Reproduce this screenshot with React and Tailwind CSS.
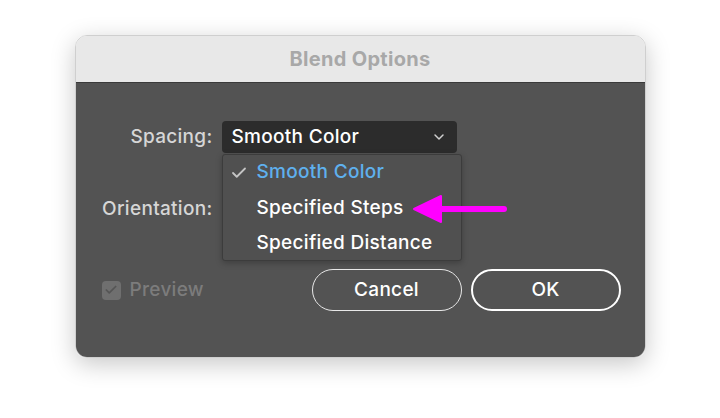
import { Check, ChevronDown } from 'lucide-react';

const font = { fontFamily: 'Inter, "Open Sans", "Liberation Sans", sans-serif' };

export default function App() {
  return (
    <div className="w-[720px] h-[418px] bg-white pt-[35px]" style={font}>
      <div className="relative mx-auto w-[571px] h-[323px] rounded-[12px] overflow-hidden border border-[#cfcfcf] shadow-[0_6px_24px_rgba(0,0,0,0.22)] flex flex-col">
        {/* Title bar */}
        <div className="h-[47px] bg-[#e8e8e8] border-b border-[#3a3a3a] flex items-center justify-center">
          <span className="text-[20px] font-bold text-[#a8a8a8] tracking-[0.3px]">Blend Options</span>
        </div>

        {/* Body */}
        <div className="flex-1 bg-[#535353] pt-[38px] text-[19px] font-medium tracking-[0.3px]">
          <div className="flex items-center h-[32px]">
            <div className="w-[138px] pr-[1px] text-right text-[#d6d6d6]">Spacing:</div>
            <div className="ml-[8px] w-[235px] h-[32px] rounded-[4px] bg-[#2c2c2c] flex items-center justify-between pl-[10px] pr-[10px] text-white">
              <span>Smooth Color</span>
              <ChevronDown className="w-[16px] h-[16px] text-[#d0d0d0]" strokeWidth={2.2} />
            </div>
          </div>

          <div className="flex items-center h-[32px] mt-[40px]">
            <div className="w-[138px] pr-[1px] text-right text-[#d6d6d6]">Orientation:</div>
          </div>

          <div className="flex items-center mt-[44px] pl-[26px] pr-[24px]">
            <div className="flex items-center gap-[9px] text-[#7c7c7c]">
              <div className="w-[19px] h-[19px] rounded-[4px] bg-[#6f6f6f] flex items-center justify-center">
                <Check className="w-[14px] h-[14px] text-[#555555]" strokeWidth={3} />
              </div>
              <span>Preview</span>
            </div>
            <div className="ml-auto flex gap-[9px]">
              <button className="w-[150px] h-[42px] rounded-full border-[1.5px] border-[#e8e8e8] text-white">Cancel</button>
              <button className="w-[150px] h-[42px] rounded-full border-[2.5px] border-white text-white">OK</button>
            </div>
          </div>
        </div>

        {/* Popup menu */}
        <div className="absolute left-[146px] top-[118px] w-[240px] h-[107px] bg-[#505050] border border-[#3c3c3c] rounded-[3px] shadow-[0_2px_6px_rgba(0,0,0,0.25)] text-[19px] font-medium tracking-[0.3px] flex flex-col">
          <div className="h-[36px] flex items-center">
            <Check className="ml-[7px] w-[18px] h-[18px] text-[#c4c4c4]" strokeWidth={2.4} />
            <span className="ml-[9px] text-[#5fb0ee]">Smooth Color</span>
          </div>
          <div className="h-[36px] flex items-center pl-[34px] text-white">Specified Steps</div>
          <div className="h-[35px] flex items-center pl-[34px] text-white">Specified Distance</div>
        </div>

        {/* Annotation arrow */}
        <svg className="absolute left-[336px] top-[157px]" width="96" height="32" viewBox="0 0 96 32">
          <path d="M22 16 H92" stroke="#ff00ff" strokeWidth="6" strokeLinecap="round" />
          <path d="M2 16 L29 3 L29 29 Z" fill="#ff00ff" stroke="#ff00ff" strokeWidth="2" strokeLinejoin="round" />
        </svg>
      </div>
    </div>
  );
}
